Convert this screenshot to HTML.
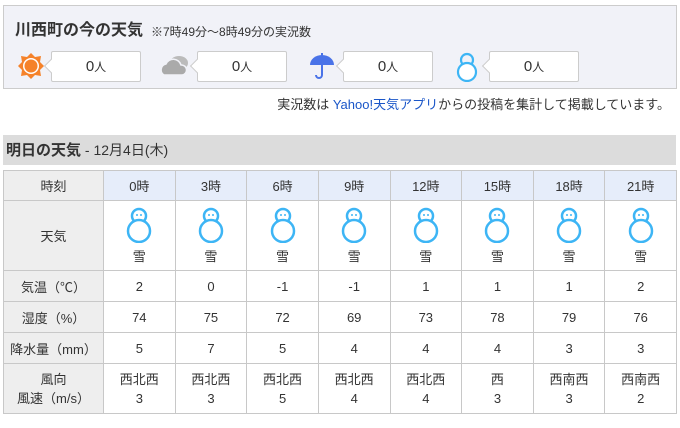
<!DOCTYPE html>
<html><head><meta charset="utf-8"><style>
body{margin:0;width:680px;height:428px;background:#fff;font-family:"Liberation Sans","Noto Sans CJK JP",sans-serif;color:#333;position:relative;overflow:hidden}
.top{position:absolute;left:3px;top:5px;width:672px;height:82px;background:#f1f2f8;border:1px solid #ccc}
.ttl{position:absolute;left:11px;top:10px;font-size:16px;font-weight:bold;color:#333}
.sub{position:absolute;left:147px;top:17px;font-size:12px;color:#333}
.ic{position:absolute;top:48px}
.bx{position:absolute;top:45px;width:88px;height:29px;background:#fff;border:1px solid #ccc;border-radius:2px;text-align:center;line-height:29px;font-size:15px}
.bx:before{content:"";position:absolute;left:-6px;top:9px;width:9px;height:9px;background:#fff;border-left:1px solid #ccc;border-bottom:1px solid #ccc;transform:rotate(45deg)}
.bx small{font-size:12px}
.note{position:absolute;right:10px;top:94px;font-size:13px}
.note a{color:#1a56c8;text-decoration:none}
.h2{position:absolute;left:3px;top:135px;width:673px;height:30px;background:#dcdcdc;line-height:30px;font-size:14px}
.h2 b{font-size:15px;margin-left:3px}
table{position:absolute;left:3px;top:170px;border-collapse:collapse;width:674px;table-layout:fixed;font-size:13px}
td{border:1px solid #c8c8c8;text-align:center;padding:0;color:#333}
td.l{background:#eee;width:99px}
tr.hd td{background:#e6edfa;height:29px}
tr.hd td.l{background:#eee}
tr.w td{height:69px}
tr.n td{height:30px}
tr.wd td{height:49px;line-height:19px}
</style></head><body>
<div class="top">
<div class="ttl">川西町の今の天気</div>
<div class="sub">※7時49分～8時49分の実況数</div>
<svg class="ic" style="left:12px;top:45px" width="30" height="30" viewBox="0 0 30 30"><polygon points="15,2 19,6 25,5 24,11 28,15 24,19 25,25 19,24 15,28 11,24 5,25 6,19 2,15 6,11 5,5 11,6" fill="#f5822a"/><circle cx="15" cy="15" r="8" fill="#fff"/><circle cx="15" cy="15" r="6.5" fill="#f5822a"/></svg>
<div class="bx" style="left:47px">0<small>人</small></div>
<svg class="ic" style="left:156px;top:47px" width="32" height="26" viewBox="0 0 32 26"><ellipse cx="19" cy="10" rx="9" ry="7" fill="#bbb"/><path d="M4 22a6 6 0 0 1 2-11a8 8 0 0 1 15 1a5 5 0 0 1 1 10z" fill="#aaa" stroke="#f1f2f8" stroke-width="1.5"/></svg>
<div class="bx" style="left:193px">0<small>人</small></div>
<svg class="ic" style="left:305px;top:47px" width="26" height="28" viewBox="0 0 26 28"><path d="M1 12a12 10 0 0 1 24 0z" fill="#4a73e8"/><path d="M13 12v10a3 3 0 0 1-6 0" fill="none" stroke="#4a73e8" stroke-width="2"/><rect x="12" y="0" width="2" height="3" fill="#4a73e8"/></svg>
<div class="bx" style="left:339px">0<small>人</small></div>
<svg class="ic" style="left:451px;top:46px" width="24" height="30" viewBox="0 0 24 30"><circle cx="12" cy="8" r="6" fill="none" stroke="#3db5f5" stroke-width="2.2"/><circle cx="12" cy="20" r="9" fill="#fff" stroke="#3db5f5" stroke-width="2.2"/></svg>
<div class="bx" style="left:485px">0<small>人</small></div>
</div>
<div class="note">実況数は <a>Yahoo!天気アプリ</a>からの投稿を集計して掲載しています。</div>
<div class="h2"><b>明日の天気</b> - 12月4日(木)</div>
<table>
<tr class="hd"><td class="l">時刻</td><td>0時</td><td>3時</td><td>6時</td><td>9時</td><td>12時</td><td>15時</td><td>18時</td><td>21時</td></tr>
<tr class="w"><td class="l">天気</td>
<td><svg width="28" height="36" viewBox="0 0 28 36"><circle cx="14" cy="9" r="7" fill="none" stroke="#3db5f5" stroke-width="2.5"/><circle cx="14" cy="24" r="11" fill="#fff" stroke="#3db5f5" stroke-width="2.5"/><circle cx="12" cy="8" r="1" fill="#3db5f5"/><circle cx="16" cy="8" r="1" fill="#3db5f5"/></svg><br>雪</td>
<td><svg width="28" height="36" viewBox="0 0 28 36"><circle cx="14" cy="9" r="7" fill="none" stroke="#3db5f5" stroke-width="2.5"/><circle cx="14" cy="24" r="11" fill="#fff" stroke="#3db5f5" stroke-width="2.5"/><circle cx="12" cy="8" r="1" fill="#3db5f5"/><circle cx="16" cy="8" r="1" fill="#3db5f5"/></svg><br>雪</td>
<td><svg width="28" height="36" viewBox="0 0 28 36"><circle cx="14" cy="9" r="7" fill="none" stroke="#3db5f5" stroke-width="2.5"/><circle cx="14" cy="24" r="11" fill="#fff" stroke="#3db5f5" stroke-width="2.5"/><circle cx="12" cy="8" r="1" fill="#3db5f5"/><circle cx="16" cy="8" r="1" fill="#3db5f5"/></svg><br>雪</td>
<td><svg width="28" height="36" viewBox="0 0 28 36"><circle cx="14" cy="9" r="7" fill="none" stroke="#3db5f5" stroke-width="2.5"/><circle cx="14" cy="24" r="11" fill="#fff" stroke="#3db5f5" stroke-width="2.5"/><circle cx="12" cy="8" r="1" fill="#3db5f5"/><circle cx="16" cy="8" r="1" fill="#3db5f5"/></svg><br>雪</td>
<td><svg width="28" height="36" viewBox="0 0 28 36"><circle cx="14" cy="9" r="7" fill="none" stroke="#3db5f5" stroke-width="2.5"/><circle cx="14" cy="24" r="11" fill="#fff" stroke="#3db5f5" stroke-width="2.5"/><circle cx="12" cy="8" r="1" fill="#3db5f5"/><circle cx="16" cy="8" r="1" fill="#3db5f5"/></svg><br>雪</td>
<td><svg width="28" height="36" viewBox="0 0 28 36"><circle cx="14" cy="9" r="7" fill="none" stroke="#3db5f5" stroke-width="2.5"/><circle cx="14" cy="24" r="11" fill="#fff" stroke="#3db5f5" stroke-width="2.5"/><circle cx="12" cy="8" r="1" fill="#3db5f5"/><circle cx="16" cy="8" r="1" fill="#3db5f5"/></svg><br>雪</td>
<td><svg width="28" height="36" viewBox="0 0 28 36"><circle cx="14" cy="9" r="7" fill="none" stroke="#3db5f5" stroke-width="2.5"/><circle cx="14" cy="24" r="11" fill="#fff" stroke="#3db5f5" stroke-width="2.5"/><circle cx="12" cy="8" r="1" fill="#3db5f5"/><circle cx="16" cy="8" r="1" fill="#3db5f5"/></svg><br>雪</td>
<td><svg width="28" height="36" viewBox="0 0 28 36"><circle cx="14" cy="9" r="7" fill="none" stroke="#3db5f5" stroke-width="2.5"/><circle cx="14" cy="24" r="11" fill="#fff" stroke="#3db5f5" stroke-width="2.5"/><circle cx="12" cy="8" r="1" fill="#3db5f5"/><circle cx="16" cy="8" r="1" fill="#3db5f5"/></svg><br>雪</td>
</tr>
<tr class="n"><td class="l">気温（℃）</td><td>2</td><td>0</td><td>-1</td><td>-1</td><td>1</td><td>1</td><td>1</td><td>2</td></tr>
<tr class="n"><td class="l">湿度（%）</td><td>74</td><td>75</td><td>72</td><td>69</td><td>73</td><td>78</td><td>79</td><td>76</td></tr>
<tr class="n"><td class="l">降水量（mm）</td><td>5</td><td>7</td><td>5</td><td>4</td><td>4</td><td>4</td><td>3</td><td>3</td></tr>
<tr class="wd"><td class="l">風向<br>風速（m/s）</td><td>西北西<br>3</td><td>西北西<br>3</td><td>西北西<br>5</td><td>西北西<br>4</td><td>西北西<br>4</td><td>西<br>3</td><td>西南西<br>3</td><td>西南西<br>2</td></tr>
</table>
</body></html>
